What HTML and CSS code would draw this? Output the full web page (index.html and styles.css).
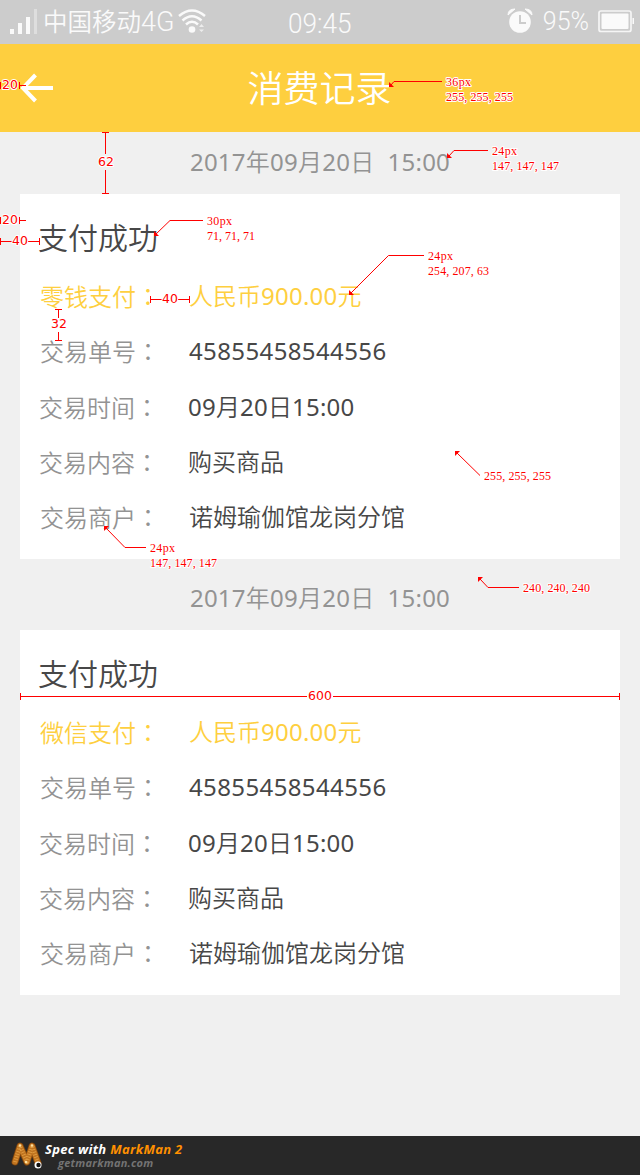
FILE: index.html
```html
<!DOCTYPE html>
<html lang="zh-CN">
<head>
<meta charset="utf-8">
<title>消费记录</title>
<link rel="stylesheet" href="styles.css">
</head>
<body>
<div class="screen">
  <div class="statusbar">
    <div class="status-left">
      <svg class="signal" width="30" height="26" viewBox="0 0 30 26"><path d="M1 20h4v5H1zM9 14h4v11H9zM17 8h4v17h-4z" fill="#fafafa"/><path d="M25 0h3v25h-3z" fill="#dedede"/></svg>
      <span class="carrier">中国移动<span class="net">4G</span></span>
      <svg class="wifi" width="28" height="26" viewBox="0 0 28 26"><g fill="none" stroke="#fafafa" stroke-width="2.5"><path d="M1 8Q14-3 27 8M4.500 12.500Q14 4 23.500 12.500M8 16.500Q14 11 20 16.500"/></g><circle cx="14" cy="21.500" r="3.300" fill="#fafafa"/><path d="M21 19l2.500-3 2.500 3zM21 21.500h5L23.500 24z" fill="#ededed"/></svg>
    </div>
    <span class="clock">09:45</span>
    <div class="status-right">
      <svg class="alarm" width="26" height="26" viewBox="0 0 26 26"><g fill="#fafafa"><path d="M1 7Q1 1 8 1L1 7zM25 7Q25 1 18 1L25 7z" stroke="#fafafa"/><circle cx="13" cy="14" r="10.800"/></g><path d="M13 7v8h6" fill="none" stroke="#ccc" stroke-width="2"/></svg>
      <span class="percent">95%</span>
      <svg class="battery" width="37" height="23" viewBox="0 0 37 23"><rect x="1" y="1" width="32" height="20.500" rx="2" fill="none" stroke="#f5f5f5" stroke-width="1.700"/><rect x="3.500" y="3.500" width="27" height="15.500" rx="1" fill="#fafafa"/><path d="M34.500 8h1.500v6h-1.500z" fill="#fafafa"/></svg>
    </div>
  </div>
  <header class="navbar">
    <svg class="back" width="34" height="30" viewBox="0 0 34 30"><path d="M15.500 2L3 15l12.500 13M2 15h31" fill="none" stroke="#fff" stroke-width="4"/></svg>
    <h1 class="title">消费记录</h1>
  </header>
  <main class="records">
    <div class="date"><b>2017</b>年<b>09</b>月<b>20</b>日<b>&nbsp; 15:00</b></div>
    <section class="card">
      <h2 class="result">支付成功</h2>
      <div class="row paid"><span class="label">零钱支付<i class="colon" lang="zh-TW">：</i></span><span class="value">人民币<b>900.00</b>元</span></div>
      <div class="row"><span class="label">交易单号<i class="colon" lang="zh-TW">：</i></span><span class="value serial"><b>45855458544556</b></span></div>
      <div class="row near"><span class="label">交易时间<i class="colon" lang="zh-TW">：</i></span><span class="value"><b>09</b>月<b>20</b>日<b>15:00</b></span></div>
      <div class="row near"><span class="label">交易内容<i class="colon" lang="zh-TW">：</i></span><span class="value">购买商品</span></div>
      <div class="row"><span class="label">交易商户<i class="colon" lang="zh-TW">：</i></span><span class="value">诺姆瑜伽馆龙岗分馆</span></div>
    </section>
    <div class="date later"><b>2017</b>年<b>09</b>月<b>20</b>日<b>&nbsp; 15:00</b></div>
    <section class="card">
      <h2 class="result">支付成功</h2>
      <div class="row paid"><span class="label">微信支付<i class="colon" lang="zh-TW">：</i></span><span class="value">人民币<b>900.00</b>元</span></div>
      <div class="row"><span class="label">交易单号<i class="colon" lang="zh-TW">：</i></span><span class="value serial"><b>45855458544556</b></span></div>
      <div class="row near"><span class="label">交易时间<i class="colon" lang="zh-TW">：</i></span><span class="value"><b>09</b>月<b>20</b>日<b>15:00</b></span></div>
      <div class="row near"><span class="label">交易内容<i class="colon" lang="zh-TW">：</i></span><span class="value">购买商品</span></div>
      <div class="row"><span class="label">交易商户<i class="colon" lang="zh-TW">：</i></span><span class="value">诺姆瑜伽馆龙岗分馆</span></div>
    </section>
  </main>
  <footer class="credit">
    <svg class="mark" width="32" height="30" viewBox="0 0 32 30"><g fill="none" stroke-linecap="round" stroke-linejoin="round"><path d="M4 21L9 5l7 16 5-16 6 17" stroke="#7d430c" stroke-width="7"/><path d="M4 21L9 5l7 16 5-16 6 17" stroke="#c07420" stroke-width="5.500"/><path d="M4 21L9 5l7 16 5-16 6 17" stroke="#e3a044" stroke-width="4" stroke-dasharray=".8 1.800" stroke-linecap="butt"/></g><g fill="#ffe1a0"><circle cx="9" cy="4.500" r="1.300"/><circle cx="21" cy="4.500" r="1.300"/><circle cx="15" cy="21" r="1.300"/></g><circle cx="27" cy="24" r="3.500" fill="#fff"/><circle cx="27.500" cy="24" r="2.200" fill="#111"/></svg>
    <div class="credit-text">
      <div class="credit-main">Spec with <span class="brand">MarkMan 2</span></div>
      <div class="credit-site">getmarkman.com</div>
    </div>
  </footer>

  <svg class="notes" width="640" height="1175" viewBox="0 0 640 1175">
    <g class="rule">
      <path d="M0.500 82v7M19.500 82v7M19 85.500h7"/>
      <path d="M102 132.500h7M105.500 132v22M105.500 170v24M102 193.500h7"/>
      <path d="M0.500 217v7M19.500 217v7M19 220.500h7"/>
      <path d="M0.500 238v7M0 241.500h12M28 241.500h11M39.500 238v7"/>
      <path d="M150.500 296v7M150 299.500h12M178 299.500h11M189.500 296v7"/>
      <path d="M55 309.500h7M58.500 309v9M58.500 332v9M55 340.500h7"/>
      <path d="M20.500 693v7M20 696.500h287M333 696.500h287M619.500 693v7"/>
    </g>
    <g class="leader">
      <path d="M391 85l3-3.500h48"/>
      <path d="M449 156l5-5.500h34"/>
      <path d="M155 235l15-14.500h33"/>
      <path d="M350 294l38.500-38.500H424"/>
      <path d="M457 453l23 22.500"/>
      <path d="M106 528l19 19.500h21"/>
      <path d="M480 579l8 8.500h31"/>
    </g>
    <g class="tip">
      <path d="M389 82v5h5z"/><path d="M447 153v5h5z"/><path d="M154 231v5h5z"/><path d="M349 290v5h5z"/>
      <path d="M455 451h5l-5 5z"/><path d="M104 526h5l-5 5z"/><path d="M478 577h5l-5 5z"/>
    </g>
    <g class="size">
      <text x="2" y="89" textLength="16">20</text>
      <text x="98" y="166" textLength="16">62</text>
      <text x="2" y="224" textLength="16">20</text>
      <text x="12" y="245" textLength="16">40</text>
      <text x="162" y="303" textLength="16">40</text>
      <text x="51" y="328" textLength="16">32</text>
      <text x="308" y="700" textLength="24">600</text>
    </g>
    <g class="spec">
      <text x="446" y="86" textLength="25">36px</text><text x="446" y="101" textLength="67">255, 255, 255</text>
      <text x="492" y="155" textLength="25">24px</text><text x="492" y="170" textLength="67">147, 147, 147</text>
      <text x="207" y="225" textLength="25">30px</text><text x="207" y="240" textLength="48">71, 71, 71</text>
      <text x="428" y="260" textLength="25">24px</text><text x="428" y="275" textLength="61">254, 207, 63</text>
      <text x="484" y="480" textLength="67">255, 255, 255</text>
      <text x="150" y="552" textLength="25">24px</text><text x="150" y="567" textLength="67">147, 147, 147</text>
      <text x="523" y="592" textLength="67">240, 240, 240</text>
    </g>
  </svg>
</div>
</body>
</html>
```

FILE: styles.css
```css
* { box-sizing: border-box; }
body { margin: 0; background: #f0f0f0; font-family: "Noto Sans", "Noto Sans CJK SC", sans-serif; font-weight: 350; }
svg { display: block; flex: none; }
b { font-weight: 400; }
.screen { position: relative; width: 640px; height: 1175px; display: flex; flex-direction: column; overflow: hidden; background: #f0f0f0; }

.statusbar { height: 44px; background: #ccc; color: #fafafa; display: grid; grid-template-columns: 1fr auto 1fr; padding: 0 5px 0 9px; font-family: Roboto, "Noto Sans CJK SC", sans-serif; font-weight: 350; white-space: nowrap; }
.status-left, .status-right { display: flex; align-items: flex-start; }
.status-right { justify-content: flex-end; }
.signal { margin-top: 9px; }
.carrier { margin: 4px 0 0 4px; font-size: 24.500px; line-height: 36px; }
.net { font-size: 27px; }
.wifi { margin: 8px 0 0 4px; }
.clock { font-size: 27px; line-height: 36px; margin: 6px 4px 0 0; transform: scaleX(.97); }
.alarm { margin-top: 8px; }
.percent { margin: 4px 9px 0 10px; font-size: 25px; line-height: 36px; }
.battery { margin-top: 10px; }

.navbar { height: 88px; background: #fecf3f; display: grid; grid-template-columns: 34px 1fr 34px; align-items: center; padding: 0 20px; }
.title { margin: 0 1px 0 0; padding-top: 2px; text-align: center; font-size: 36px; line-height: 52px; font-weight: 350; color: #fff; }

.records { flex: 1; }
.date { height: 62px; line-height: 60px; text-align: center; font-size: 24px; letter-spacing: .25px; color: #939393; white-space: pre; }
.later { height: 71px; line-height: 78px; }
.card { margin: 0 20px; height: 365px; background: #fff; padding: 0 19px; font-size: 24px; color: #474747; }
.result { margin: 0 0 0 -1px; height: 74px; line-height: 88px; font-size: 30px; font-weight: 350; }
.row { display: flex; height: 55.300px; line-height: 55px; padding-left: 1px; white-space: nowrap; }
.near { padding-left: 0; }
.label { width: 149px; color: #939393; }
.colon { font-style: normal; font-family: "Noto Sans CJK TC", sans-serif; }
.value b { letter-spacing: .25px; }
.paid, .paid .label { color: #fecf3f; }
.value.serial b { letter-spacing: .38px; }

.credit { height: 39px; background: #282828; display: flex; padding: 5px 0 0 11px; font-family: "Open Sans", sans-serif; font-style: italic; font-weight: 700; }
.credit-text { margin-left: 2px; white-space: nowrap; }
.credit-main { color: #fff; font-size: 13px; line-height: 17px; letter-spacing: .3px; }
.brand { color: #ff9000; }
.credit-site { color: #737373; font-size: 11px; line-height: 10px; padding-left: 13px; letter-spacing: .25px; }

.notes { position: absolute; left: 0; top: 0; }
.rule path, .leader path { fill: none; stroke: #f00; stroke-width: 1; }
.tip path { fill: #f00; }
.notes text { fill: #f00; stroke: #fff; stroke-width: 2px; paint-order: stroke; stroke-linejoin: round; font-weight: 400; }
.size text { font-family: "DejaVu Sans", sans-serif; font-size: 12.500px; }
.spec text { font-family: "Liberation Serif", serif; font-size: 12px; }
```
